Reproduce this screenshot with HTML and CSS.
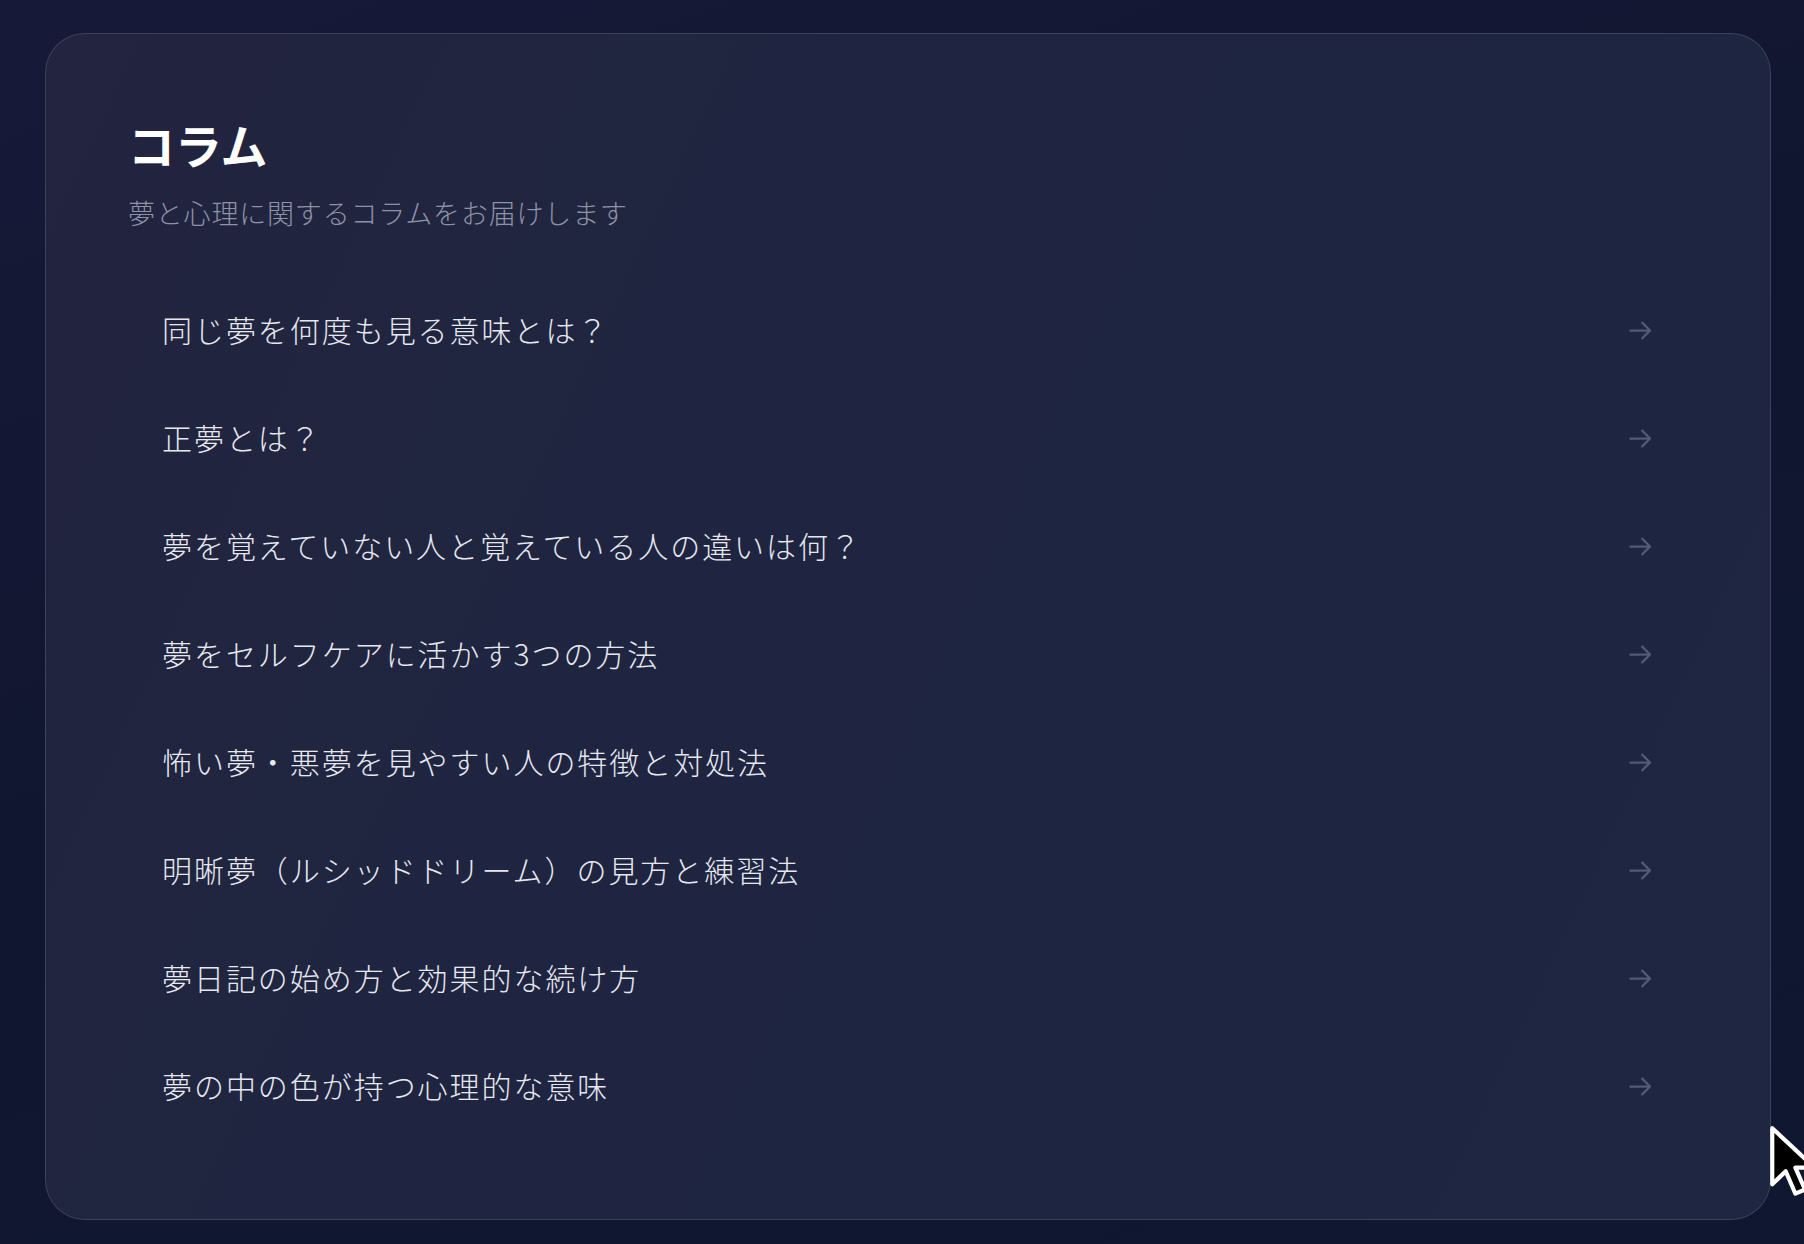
FILE: index.html
```html
<!DOCTYPE html>
<html lang="ja">

<head>
    <meta charset="utf-8">
    <title>コラム</title>
    <link rel="stylesheet" href="styles.css">
</head>

<body>
    <div class="page">
        <section class="card">
            <div class="card-header">
                <h1>コラム</h1>
                <p class="lead">夢と心理に関するコラムをお届けします</p>
            </div>

            <ul class="column-list">
                <li><a href="#"><span>同じ夢を何度も見る意味とは？</span><svg class="arrow" viewBox="0 0 24 24"><path d="M3 12h17M13.5 5l7 7-7 7"/></svg></a></li>
                <li><a href="#"><span>正夢とは？</span><svg class="arrow" viewBox="0 0 24 24"><path d="M3 12h17M13.5 5l7 7-7 7"/></svg></a></li>
                <li><a href="#"><span>夢を覚えていない人と覚えている人の違いは何？</span><svg class="arrow" viewBox="0 0 24 24"><path d="M3 12h17M13.5 5l7 7-7 7"/></svg></a></li>
                <li><a href="#"><span>夢をセルフケアに活かす3つの方法</span><svg class="arrow" viewBox="0 0 24 24"><path d="M3 12h17M13.5 5l7 7-7 7"/></svg></a></li>
                <li><a href="#"><span>怖い夢・悪夢を見やすい人の特徴と対処法</span><svg class="arrow" viewBox="0 0 24 24"><path d="M3 12h17M13.5 5l7 7-7 7"/></svg></a></li>
                <li><a href="#"><span>明晰夢（ルシッドドリーム）の見方と練習法</span><svg class="arrow" viewBox="0 0 24 24"><path d="M3 12h17M13.5 5l7 7-7 7"/></svg></a></li>
                <li><a href="#"><span>夢日記の始め方と効果的な続け方</span><svg class="arrow" viewBox="0 0 24 24"><path d="M3 12h17M13.5 5l7 7-7 7"/></svg></a></li>
                <li><a href="#"><span>夢の中の色が持つ心理的な意味</span><svg class="arrow" viewBox="0 0 24 24"><path d="M3 12h17M13.5 5l7 7-7 7"/></svg></a></li>
            </ul>
        </section>
    </div>

    <!-- mouse pointer from the screenshot -->
    <svg class="pointer" viewBox="0 0 14 24">
        <path d="M1 1v17.5l4.2-4.1 3 7 3-1.3-3-6.8h6z"/>
    </svg>
</body>

</html>
```

FILE: styles.css
```css
html,
body {
    height: 100%;
}

body {
    margin: 0;
    font-family: "Noto Sans CJK JP", "Noto Sans", sans-serif;
    background: linear-gradient(160deg, #171938 0%, #111630 45%, #0f1830 100%);
    color: #e3e5ee;
    overflow: hidden;
}

.page {
    padding: 33px 33px 0 45px;
}

.card {
    border: 1px solid rgba(255, 255, 255, 0.13);
    border-radius: 40px;
    padding: 82px 82px 80px 82px;
    background: linear-gradient(115deg, #23243f 0%, #1f2540 35%, #1e2540 70%, #1f2642 100%);
}

.card-header h1 {
    margin: 0;
    font-size: 47px;
    line-height: 1.2;
    font-weight: 700;
    color: #ffffff;
}

.lead {
    margin: 21px 0 0 0;
    font-size: 27px;
    font-weight: 300;
    letter-spacing: 0.03em;
    line-height: 1.5;
    color: #8d92a6;
}

.column-list {
    list-style: none;
    margin: 41px 0 0 0;
    padding: 0;
}

.column-list a {
    display: flex;
    align-items: center;
    justify-content: space-between;
    height: 108px;
    padding: 0 34px 0 34px;
    border-radius: 16px;
    color: #e6e8f0;
    text-decoration: none;
    font-size: 30px;
    font-weight: 300;
    letter-spacing: 0.065em;
}

.arrow {
    width: 27px;
    height: 27px;
    margin-top: 3px;
    fill: none;
    stroke: #525a72;
    stroke-width: 2;
    stroke-linecap: round;
    stroke-linejoin: round;
}

.pointer {
    position: absolute;
    left: 1769px;
    top: 1125px;
    width: 45px;
    height: 77px;
    fill: #000000;
    stroke: #ffffff;
    stroke-width: 1.3;
    stroke-linejoin: round;
}
```
